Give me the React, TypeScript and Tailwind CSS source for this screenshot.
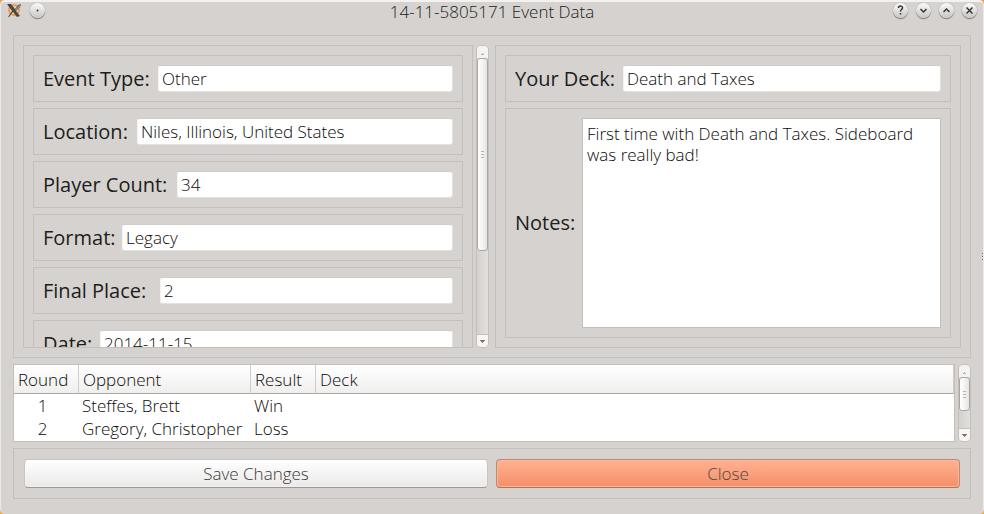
import type { ReactNode } from "react";

const fields = [
  { id: "event-type", label: "Event Type:", value: "Other", width: "w-[115px]" },
  { id: "location", label: "Location:", value: "Niles, Illinois, United States", width: "w-[94px]" },
  { id: "player-count", label: "Player Count:", value: "34", width: "w-[134px]" },
  { id: "format", label: "Format:", value: "Legacy", width: "w-[79px]" },
  { id: "final-place", label: "Final Place:", value: "2", width: "w-[117px]" },
  { id: "date", label: "Date:", value: "2014-11-15", width: "w-[57px]" },
];

const rounds = [
  { round: "1", opponent: "Steffes, Brett", result: "Win", deck: "" },
  { round: "2", opponent: "Gregory, Christopher", result: "Loss", deck: "" },
];

function Panel({ className = "", children }: { className?: string; children: ReactNode }) {
  return <div className={`border border-[#c3bfbc] ${className}`}>{children}</div>;
}

function Field({ id, label, value, width }: { id: string; label: string; value: string; width: string }) {
  return (
    <Panel className="flex h-[47px] shrink-0 items-center px-[9px]">
      <label htmlFor={id} className={`${width} shrink-0 text-[20px] leading-[26px] font-medium whitespace-nowrap`}>
        {label}
      </label>
      <input
        id={id}
        type="text"
        defaultValue={value}
        className="h-[27px] min-w-0 flex-1 rounded-[3px] border border-[#e4e2e0] border-t-[#d0ccc9] border-l-[#f4f3f2] bg-white px-[3px] text-[17px] font-light text-[#0c0a09] outline-none"
      />
    </Panel>
  );
}

function ScrollBar({ thumb, label }: { thumb: string; label: string }) {
  return (
    <div role="group" aria-label={label} className="flex w-[13px] shrink-0 flex-col overflow-hidden rounded-[5px] border border-[#c3bfbc] bg-[#dddbd9]">
      <button aria-label="Scroll up" className="flex h-[12px] shrink-0 items-center justify-center bg-[#f4f3f2] pt-[3px]">
        <svg width="3" height="2" viewBox="0 0 3 2"><path d="M1 0h1v1h1v1H0V1h1z" fill="#b5b2b0" /></svg>
      </button>
      <div className={`${thumb} flex shrink-0 flex-col items-center justify-center gap-[2px] rounded-[3px] border border-[#aaa6a3] bg-linear-to-r from-white via-[#f4f3f2] to-[#e6e4e3]`}>
        <span className="h-px w-[3px] bg-[#b5b2b0]" />
        <span className="h-px w-[3px] bg-[#b5b2b0]" />
        <span className="h-px w-[3px] bg-[#b5b2b0]" />
      </div>
      <div className="flex-1 bg-linear-to-r from-[#d3d0cd] to-[#e2e0de]" />
      <button aria-label="Scroll down" className="flex h-[13px] shrink-0 items-center justify-center border-t border-[#c3bfbc] bg-[#f7f6f5]">
        <svg width="5" height="3" viewBox="0 0 5 3"><path d="M0 0h5v1H4v1H3v1H2V2H1V1H0z" fill="#7a7774" /></svg>
      </button>
    </div>
  );
}

function TitleButton({ label, children }: { label: string; children: ReactNode }) {
  return (
    <button aria-label={label} className="flex size-[15px] items-center justify-center rounded-full bg-linear-to-b from-[#fafafa] to-[#c9c6c4] shadow-[0_1px_1px_#777472,0_0_1px_#8d8987]">
      <svg width="15" height="15" viewBox="0 0 15 15" fill="none" stroke="#393634" strokeWidth="1.5">
        {children}
      </svg>
    </button>
  );
}

export default function App() {
  return (
    <div className="bg-[#e6a84d] font-['Open_Sans','Noto_Sans',sans-serif] text-[#201d1b]">
      <div className="flex h-screen flex-col rounded-[5px] border-t-2 border-r border-l border-t-[#f3f2f1] border-r-[#ebe9e7] border-l-[#ebe9e7] bg-[#d6d2cf] px-[12px] pb-[15px]">
        <header className="-mx-[6px] flex h-[33px] shrink-0 items-start justify-between pt-px">
          <div className="flex w-[90px] gap-[8px]">
            <svg width="15" height="15" viewBox="0 0 15 15" fill="none" aria-hidden="true">
              <circle cx="7" cy="7" r="5" stroke="#ef9a50" strokeWidth="2" />
              <circle cx="7" cy="8" r="3" fill="#f4df8c" />
              <path d="M0 1h4l4 5 3-4 3-1-1 3-4 4 4 5-3 1-4-5-4 5H1l4-6z" fill="#4b4840" />
              <path d="m8 6 4-4 2-1-1 3-4 4z" fill="#8b8883" />
            </svg>
            <TitleButton label="On all desktops">
              <circle cx="7.5" cy="7.5" r="1" fill="#393634" stroke="none" />
            </TitleButton>
          </div>
          <h1 className="text-[17px] leading-[18px] font-light">14-11-5805171 Event Data</h1>
          <div className="flex w-[90px] justify-end gap-[8px]">
            <TitleButton label="Help">
              <path d="M5.500 5c0-2.500 4-2.500 4-.2 0 1.700-2 1.700-2 3.700M7.500 10v1.500" />
            </TitleButton>
            <TitleButton label="Minimize"><path d="m4.500 6 3 3 3-3" /></TitleButton>
            <TitleButton label="Maximize"><path d="m4.500 9 3-3 3 3" /></TitleButton>
            <TitleButton label="Close window"><path d="m4.500 4.500 6 6m0-6-6 6" /></TitleButton>
          </div>
        </header>

        <main className="relative flex min-h-0 flex-1 flex-col gap-[6px]">
          <Panel className="grid min-h-0 flex-1 grid-cols-2 grid-rows-1 gap-[6px] p-[9px]">
            <div className="flex min-h-0 min-w-0 gap-[3px]">
              <Panel className="flex min-w-0 flex-1 flex-col gap-[6px] overflow-hidden px-[9px] pt-[9px]">
                {fields.map((field) => (
                  <Field key={field.id} {...field} />
                ))}
              </Panel>
              <ScrollBar label="Event details" thumb="h-[193px]" />
            </div>
            <Panel className="flex min-h-0 min-w-0 flex-col gap-[6px] p-[9px]">
              <Field id="your-deck" label="Your Deck:" value="Death and Taxes" width="w-[108px]" />
              <Panel className="flex min-h-0 flex-1 items-center p-[9px]">
                <label htmlFor="notes" className="w-[67px] shrink-0 text-[20px] leading-[26px] font-medium">Notes:</label>
                <textarea
                  id="notes"
                  defaultValue="First time with Death and Taxes. Sideboard was really bad!"
                  className="h-full min-w-0 flex-1 resize-none border border-[#c3bfbc] bg-white px-[4px] py-[4px] text-[17px] leading-[21px] font-light text-[#0c0a09] outline-none"
                />
              </Panel>
            </Panel>
          </Panel>

          <div className="flex h-[78px] shrink-0 gap-[3px]">
            <div className="min-w-0 flex-1 overflow-hidden border border-[#c3bfbc] bg-white">
              <table className="w-full table-fixed border-separate border-spacing-0 text-[17px] leading-[23px] font-light text-[#0c0a09]">
                <colgroup>
                  <col className="w-[65px]" />
                  <col className="w-[172px]" />
                  <col className="w-[65px]" />
                  <col />
                </colgroup>
                <thead>
                  <tr className="h-[29px] bg-linear-to-b from-white to-[#efeeed] text-left">
                    {["Round", "Opponent", "Result", "Deck"].map((name) => (
                      <th key={name} className="border-r border-b border-r-[#d0ccc9] border-b-[#aaa6a3] p-0 pl-[4px] font-light">{name}</th>
                    ))}
                  </tr>
                </thead>
                <tbody>
                  {rounds.map((row) => (
                    <tr key={row.round} className="h-[23px] whitespace-nowrap">
                      <td className="p-0 pr-[8px] text-center">{row.round}</td>
                      <td className="p-0 pl-[3px]">{row.opponent}</td>
                      <td className="p-0 pl-[3px]">{row.result}</td>
                      <td className="p-0 pl-[3px]">{row.deck}</td>
                    </tr>
                  ))}
                </tbody>
              </table>
            </div>
            <ScrollBar label="Rounds" thumb="h-[34px]" />
          </div>

          <Panel className="flex h-[51px] shrink-0 gap-[8px] p-[10px]">
            <button className="flex-1 rounded-[4px] border border-[#c8c4c1] border-b-[#9c9896] bg-linear-to-b from-white to-[#eae9e8] text-[17px] leading-[22px] font-light text-[#3c3937] shadow-[inset_0_0_2px_#ffffff]">Save Changes</button>
            <button className="flex-1 rounded-[4px] border border-[#b98a76] border-b-[#a57661] bg-linear-to-b from-[#ffb294] to-[#f48e66] text-[17px] leading-[22px] font-light text-[#4c4947] shadow-[inset_0_0_1px_1px_#ffb79a]">Close</button>
          </Panel>

          <div aria-hidden="true" className="absolute top-[218px] -right-[12px] flex flex-col gap-[2px]">
            <span className="size-px bg-[#777472]" />
            <span className="size-px bg-[#777472]" />
            <span className="size-px bg-[#777472]" />
          </div>
        </main>
      </div>
    </div>
  );
}
